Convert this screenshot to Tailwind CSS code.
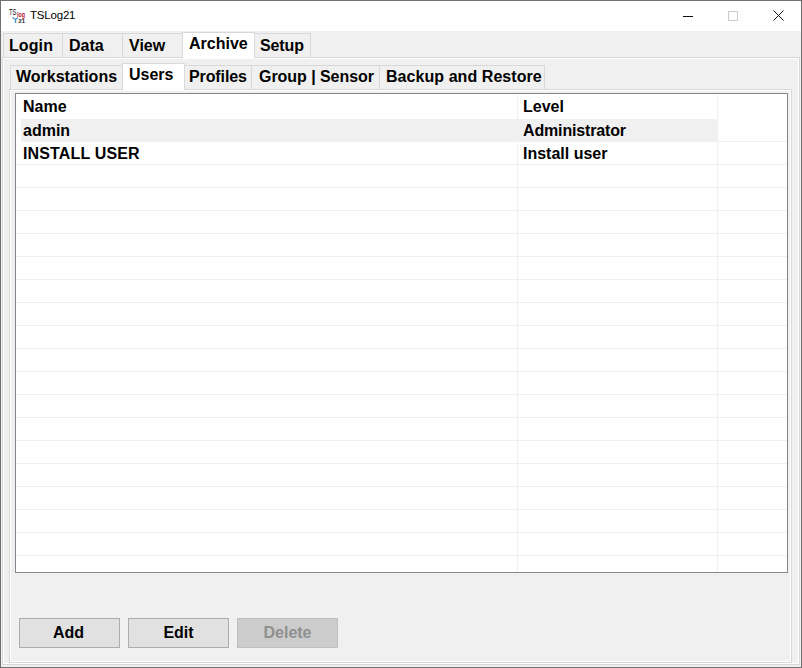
<!DOCTYPE html>
<html>
<head>
<meta charset="utf-8">
<script src="https://cdn.jsdelivr.net/npm/@tailwindcss/browser@4"></script>
</head>
<body class="m-0 overflow-hidden bg-white">
<div class="w-[802px] h-[668px] flex flex-col border border-[#707070] bg-[#f0f0f0] font-['Liberation_Sans',Arial,sans-serif] text-black">
  <!-- title bar -->
  <div class="h-[30px] shrink-0 bg-white flex items-center">
    <svg class="ml-[7px] mb-[2px] w-[18px] h-[18px]" viewBox="0 0 18 18">
      <text x="1" y="8.5" font-size="8.5" font-family="Liberation Sans" fill="#111" textLength="7.5" lengthAdjust="spacingAndGlyphs">TS</text>
      <text x="9" y="11" font-size="6.5" font-weight="bold" font-family="Liberation Sans" fill="#c01030" textLength="8" lengthAdjust="spacingAndGlyphs">log</text>
      <text x="10.5" y="16.5" font-size="6" font-weight="bold" font-family="Liberation Sans" fill="#222" textLength="6.5" lengthAdjust="spacingAndGlyphs">21</text>
      <path d="M4.5 11.5 L7.5 13.5 L10 11.5 M7.5 13.5 V17" stroke="#4a90c8" stroke-width="1.3" fill="none"/>
    </svg>
    <span class="ml-[4px] mb-[1px] text-[11.5px] tracking-[-0.2px] leading-none">TSLog21</span>
    <div class="ml-auto flex items-center">
      <svg class="w-[10px] h-[10px] mr-[35px] mb-[1px]" viewBox="0 0 10 10"><path d="M0 5.5H10" stroke="#111" stroke-width="1"/></svg>
      <svg class="w-[10px] h-[10px] mr-[35px] mb-[1px]" viewBox="0 0 10 10"><rect x="0.5" y="0.5" width="9" height="9" fill="none" stroke="#cccccc"/></svg>
      <svg class="w-[11px] h-[11px] mr-[17px] mb-[1px]" viewBox="0 0 11 11"><path d="M0.5 0.5L10.5 10.5M10.5 0.5L0.5 10.5" stroke="#111" stroke-width="1"/></svg>
    </div>
  </div>
  <!-- main tabs -->
  <div class="h-[26px] shrink-0 flex items-end pl-[2px] text-[16px] font-bold leading-none relative z-10">
    <div class="w-[60px] h-[24px] border border-b-0 border-[#d9d9d9] pl-[5px] pt-[4px] tracking-[0.1px]">Login</div>
    <div class="w-[60px] h-[24px] border border-l-0 border-b-0 border-[#d9d9d9] pl-[6px] pt-[4px]">Data</div>
    <div class="w-[59px] h-[24px] border-t border-[#d9d9d9] pl-[6px] pt-[4px]">View</div>
    <div class="w-[73px] h-[26px] -mb-[1px] bg-white border border-b-0 border-[#d9d9d9] pl-[6px] pt-[3px]">Archive</div>
    <div class="w-[56px] h-[24px] border border-l-0 border-b-0 border-[#d9d9d9] pl-[5px] pt-[4px] tracking-[-0.1px]">Setup</div>
  </div>
  <!-- outer panel -->
  <div class="mx-[1px] mb-[2px] flex-1 min-h-0 border border-[#d9d9d9] flex">
    <div class="flex-1 min-w-0 border border-white flex flex-col pl-[5px] pr-[6px]">
      <!-- sub tabs -->
      <div class="h-[29px] mt-[1px] shrink-0 flex items-end pl-[1px] text-[16px] font-bold leading-none relative z-10">
        <div class="w-[112px] h-[24px] border border-b-0 border-r-0 border-[#d9d9d9] pl-[5px] pt-[3px]">Workstations</div>
        <div class="w-[63px] h-[27px] -mb-[1px] bg-white border border-b-0 border-[#d9d9d9] pl-[6px] pt-[3px]">Users</div>
        <div class="w-[67px] h-[24px] border-t border-r border-[#d9d9d9] pl-[4px] pt-[3px] tracking-[-0.1px]">Profiles</div>
        <div class="w-[128px] h-[24px] border-t border-r border-[#d9d9d9] pl-[7px] pt-[3px] tracking-[-0.05px]">Group | Sensor</div>
        <div class="w-[165px] h-[24px] border-t border-r border-[#d9d9d9] pl-[6px] pt-[3px] tracking-[0.06px]">Backup and Restore</div>
      </div>
      <!-- inner panel -->
      <div class="flex-1 min-h-0 border border-[#d9d9d9] flex">
        <div class="flex-1 min-w-0 border border-white flex flex-col pl-[4px] pr-[2px] pt-[2px]">
          <!-- list -->
          <div class="h-[480px] shrink-0 border border-[#828790] bg-white overflow-hidden text-[16px] font-bold leading-none">
            <div class="flex h-[25px]">
              <div class="w-[502px] h-full border-r border-[#f0f0f0] pl-[7px] pt-[5px]">Name</div>
              <div class="w-[200px] h-full border-r border-[#f0f0f0] pl-[5px] pt-[5px]">Level</div>
            </div>
            <div class="flex h-[23px]">
              <div class="ml-[5px] w-[697px] bg-[#f0f0f0] flex pt-[4px]"><div class="w-[502px] pl-[2px]">admin</div><div class="tracking-[-0.15px]">Administrator</div></div>
              <div class="flex-1 border-b border-[#f0f0f0]"></div>
            </div>
            <div class="flex h-[23px] border-b border-[#f0f0f0]"><div class="w-[502px] h-full border-r border-[#f0f0f0] pl-[7px] pt-[4px] tracking-[0.15px]">INSTALL USER</div><div class="w-[200px] h-full border-r border-[#f0f0f0] pl-[5px] pt-[4px]">Install user</div></div>
            <div class="flex h-[23px] border-b border-[#f0f0f0]"><div class="w-[502px] h-full border-r border-[#f0f0f0]"></div><div class="w-[200px] h-full border-r border-[#f0f0f0]"></div></div>
            <div class="flex h-[23px] border-b border-[#f0f0f0]"><div class="w-[502px] h-full border-r border-[#f0f0f0]"></div><div class="w-[200px] h-full border-r border-[#f0f0f0]"></div></div>
            <div class="flex h-[23px] border-b border-[#f0f0f0]"><div class="w-[502px] h-full border-r border-[#f0f0f0]"></div><div class="w-[200px] h-full border-r border-[#f0f0f0]"></div></div>
            <div class="flex h-[23px] border-b border-[#f0f0f0]"><div class="w-[502px] h-full border-r border-[#f0f0f0]"></div><div class="w-[200px] h-full border-r border-[#f0f0f0]"></div></div>
            <div class="flex h-[23px] border-b border-[#f0f0f0]"><div class="w-[502px] h-full border-r border-[#f0f0f0]"></div><div class="w-[200px] h-full border-r border-[#f0f0f0]"></div></div>
            <div class="flex h-[23px] border-b border-[#f0f0f0]"><div class="w-[502px] h-full border-r border-[#f0f0f0]"></div><div class="w-[200px] h-full border-r border-[#f0f0f0]"></div></div>
            <div class="flex h-[23px] border-b border-[#f0f0f0]"><div class="w-[502px] h-full border-r border-[#f0f0f0]"></div><div class="w-[200px] h-full border-r border-[#f0f0f0]"></div></div>
            <div class="flex h-[23px] border-b border-[#f0f0f0]"><div class="w-[502px] h-full border-r border-[#f0f0f0]"></div><div class="w-[200px] h-full border-r border-[#f0f0f0]"></div></div>
            <div class="flex h-[23px] border-b border-[#f0f0f0]"><div class="w-[502px] h-full border-r border-[#f0f0f0]"></div><div class="w-[200px] h-full border-r border-[#f0f0f0]"></div></div>
            <div class="flex h-[23px] border-b border-[#f0f0f0]"><div class="w-[502px] h-full border-r border-[#f0f0f0]"></div><div class="w-[200px] h-full border-r border-[#f0f0f0]"></div></div>
            <div class="flex h-[23px] border-b border-[#f0f0f0]"><div class="w-[502px] h-full border-r border-[#f0f0f0]"></div><div class="w-[200px] h-full border-r border-[#f0f0f0]"></div></div>
            <div class="flex h-[23px] border-b border-[#f0f0f0]"><div class="w-[502px] h-full border-r border-[#f0f0f0]"></div><div class="w-[200px] h-full border-r border-[#f0f0f0]"></div></div>
            <div class="flex h-[23px] border-b border-[#f0f0f0]"><div class="w-[502px] h-full border-r border-[#f0f0f0]"></div><div class="w-[200px] h-full border-r border-[#f0f0f0]"></div></div>
            <div class="flex h-[23px] border-b border-[#f0f0f0]"><div class="w-[502px] h-full border-r border-[#f0f0f0]"></div><div class="w-[200px] h-full border-r border-[#f0f0f0]"></div></div>
            <div class="flex h-[23px] border-b border-[#f0f0f0]"><div class="w-[502px] h-full border-r border-[#f0f0f0]"></div><div class="w-[200px] h-full border-r border-[#f0f0f0]"></div></div>
            <div class="flex h-[23px] border-b border-[#f0f0f0]"><div class="w-[502px] h-full border-r border-[#f0f0f0]"></div><div class="w-[200px] h-full border-r border-[#f0f0f0]"></div></div>
            <div class="flex h-[23px] border-b border-[#f0f0f0]"><div class="w-[502px] h-full border-r border-[#f0f0f0]"></div><div class="w-[200px] h-full border-r border-[#f0f0f0]"></div></div>
            <div class="flex h-[16px]"><div class="w-[502px] h-full border-r border-[#f0f0f0]"></div><div class="w-[200px] h-full border-r border-[#f0f0f0]"></div></div>
          </div>
          <!-- buttons -->
          <div class="mt-auto flex gap-[8px] pl-[4px] pb-[13px] text-[16px] font-bold">
            <button class="w-[101px] h-[30px] bg-[#e1e1e1] border border-[#adadad] leading-none pr-[2px]">Add</button>
            <button class="w-[101px] h-[30px] bg-[#e1e1e1] border border-[#adadad] leading-none">Edit</button>
            <button disabled class="w-[101px] h-[30px] bg-[#cccccc] border border-[#bfbfbf] text-[#8f8f8f] leading-none">Delete</button>
          </div>
        </div>
      </div>
    </div>
  </div>
</div>
</body>
</html>
